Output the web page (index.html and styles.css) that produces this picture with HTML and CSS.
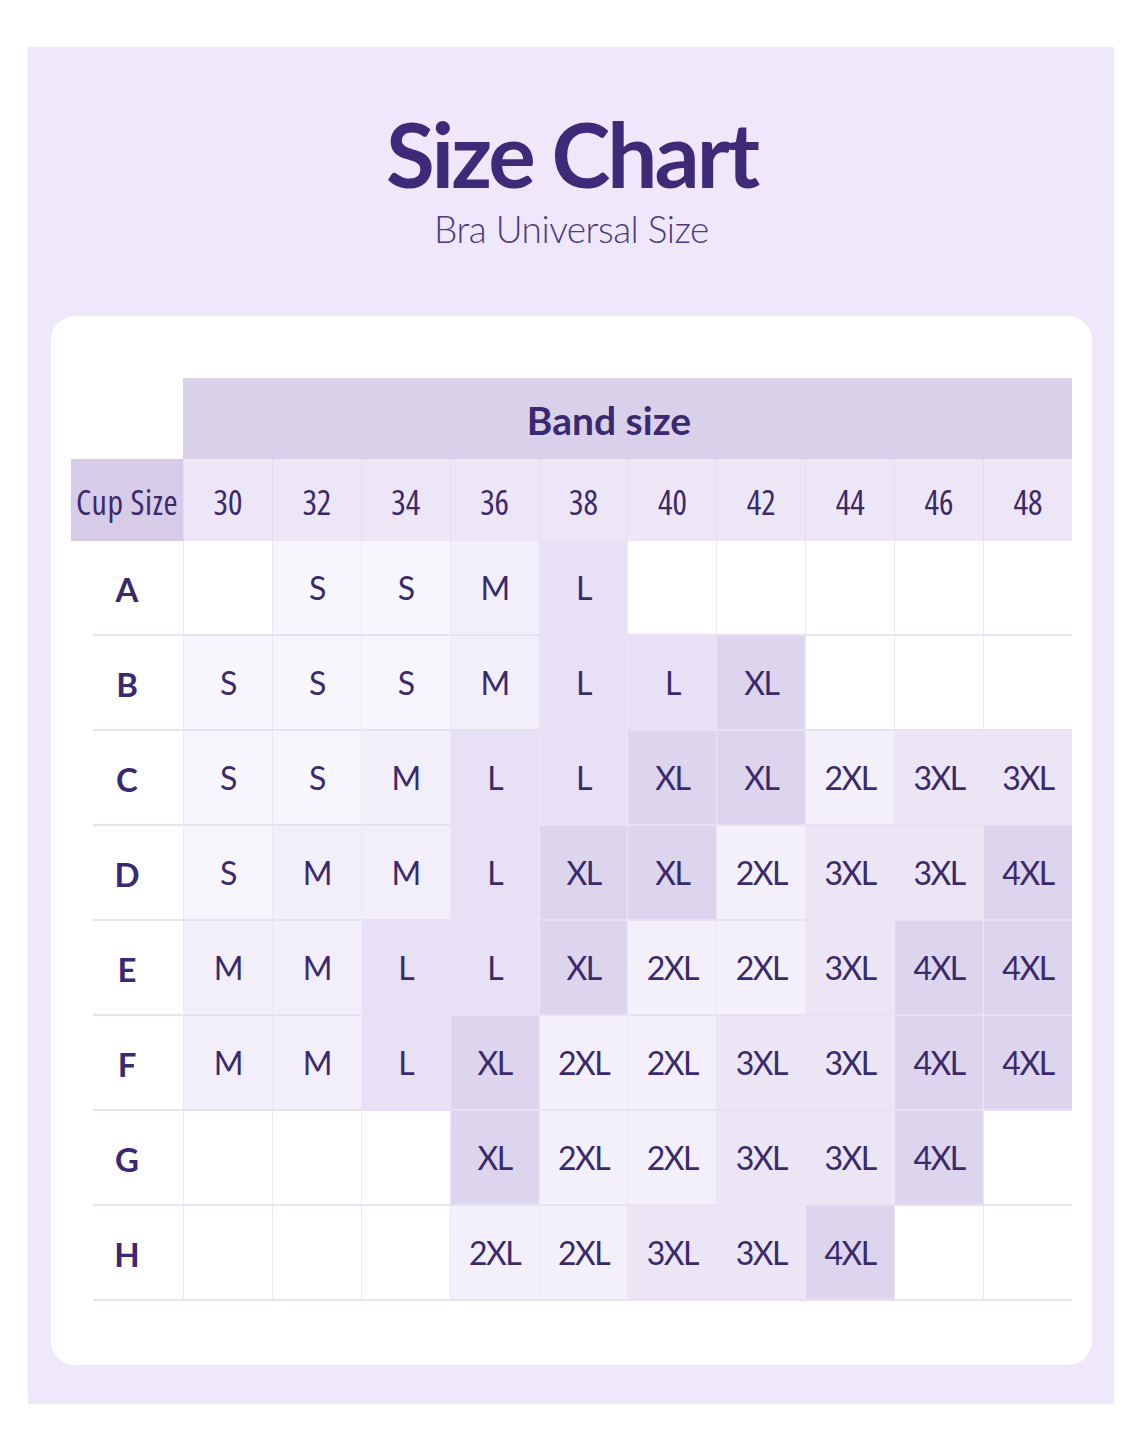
FILE: index.html
```html
<!DOCTYPE html>
<html lang="en">
<head>
<meta charset="utf-8">
<title>Size Chart</title>
<link rel="stylesheet" href="styles.css">
</head>
<body>
<div class="panel">
  <header class="head">
    <h1 class="title">Size Chart</h1>
    <p class="subtitle">Bra Universal Size</p>
  </header>
  <div class="card">
    <div class="chart">
      <div class="blank"></div>
      <div class="band">Band size</div>

      <div class="cup">Cup Size</div>
      <div class="num">30</div><div class="num">32</div><div class="num">34</div><div class="num">36</div><div class="num">38</div>
      <div class="num">40</div><div class="num">42</div><div class="num">44</div><div class="num">46</div><div class="num">48</div>

      <div class="letter">A</div>
      <div class="c e"></div><div class="c s">S</div><div class="c s">S</div><div class="c m">M</div><div class="c l">L</div>
      <div class="c e"></div><div class="c e"></div><div class="c e"></div><div class="c e"></div><div class="c e"></div>

      <div class="letter">B</div>
      <div class="c s">S</div><div class="c s">S</div><div class="c s">S</div><div class="c m">M</div><div class="c l">L</div>
      <div class="c l">L</div><div class="c xl">XL</div><div class="c e"></div><div class="c e"></div><div class="c e"></div>

      <div class="letter">C</div>
      <div class="c s">S</div><div class="c s">S</div><div class="c m">M</div><div class="c l">L</div><div class="c l">L</div>
      <div class="c xl">XL</div><div class="c xl">XL</div><div class="c x2">2XL</div><div class="c x3">3XL</div><div class="c x3">3XL</div>

      <div class="letter">D</div>
      <div class="c s">S</div><div class="c m">M</div><div class="c m">M</div><div class="c l">L</div><div class="c xl">XL</div>
      <div class="c xl">XL</div><div class="c x2">2XL</div><div class="c x3">3XL</div><div class="c x3">3XL</div><div class="c x4">4XL</div>

      <div class="letter">E</div>
      <div class="c m">M</div><div class="c m">M</div><div class="c l">L</div><div class="c l">L</div><div class="c xl">XL</div>
      <div class="c x2">2XL</div><div class="c x2">2XL</div><div class="c x3">3XL</div><div class="c x4">4XL</div><div class="c x4">4XL</div>

      <div class="letter">F</div>
      <div class="c m">M</div><div class="c m">M</div><div class="c l">L</div><div class="c xl">XL</div><div class="c x2">2XL</div>
      <div class="c x2">2XL</div><div class="c x3">3XL</div><div class="c x3">3XL</div><div class="c x4">4XL</div><div class="c x4">4XL</div>

      <div class="letter">G</div>
      <div class="c e"></div><div class="c e"></div><div class="c e"></div><div class="c xl">XL</div><div class="c x2">2XL</div>
      <div class="c x2">2XL</div><div class="c x3">3XL</div><div class="c x3">3XL</div><div class="c x4">4XL</div><div class="c e"></div>

      <div class="letter">H</div>
      <div class="c e"></div><div class="c e"></div><div class="c e"></div><div class="c x2">2XL</div><div class="c x2">2XL</div>
      <div class="c x3">3XL</div><div class="c x3">3XL</div><div class="c x4">4XL</div><div class="c e"></div><div class="c e"></div>
    </div>
  </div>
</div>
</body>
</html>
```
FILE: styles.css
```css
html, body {
  margin: 0;
  padding: 0;
  background: #ffffff;
}

body {
  padding: 47px 0 0 28px;
  font-family: Lato, "Open Sans", sans-serif;
  color: #3a2a6c;
}

.panel {
  width: 1086px;
  height: 1357px;
  box-sizing: border-box;
  background: #efe8fb;
  padding: 0 22px 0 23px;
  display: flex;
  flex-direction: column;
}

.head {
  height: 269px;
  display: flex;
  flex-direction: column;
  align-items: center;
}

.title {
  margin: 59px 0 0;
  font-size: 89px;
  line-height: 96px;
  font-weight: 700;
  letter-spacing: -3px;
  color: #3f2a7a;
}

.subtitle {
  margin: 9px 0 0;
  font-size: 37px;
  line-height: 36px;
  font-weight: 300;
  letter-spacing: -0.5px;
  color: #4a3b82;
}

.card {
  background: #ffffff;
  border-radius: 24px;
  padding: 62px 20px 65px 20px;
  height: 1049px;
  box-sizing: border-box;
}

.chart {
  display: grid;
  grid-template-columns: 112px repeat(10, 88.9px);
  grid-template-rows: 81px 82px repeat(8, 95px);
}

.blank {
  background: #ffffff;
}

.band {
  grid-column: 2 / span 10;
  background: #d9d1ea;
  display: flex;
  align-items: center;
  justify-content: center;
  font-size: 39px;
  font-weight: 700;
  color: #3a2870;
  padding: 3px 37px 0 0;
  box-sizing: border-box;
}

.cup {
  background: #d6cce8;
  display: flex;
  align-items: center;
  justify-content: center;
  font-family: "Open Sans", sans-serif;
  font-stretch: 75%;
  font-size: 34px;
  font-weight: 500;
  letter-spacing: 0.6px;
  color: #3a2a6c;
  white-space: nowrap;
  padding-top: 4px;
  box-sizing: border-box;
}

.num {
  background: #ece6f6;
  border-left: 1px solid #e4ddf2;
  display: flex;
  align-items: center;
  justify-content: center;
  font-family: "Open Sans", sans-serif;
  font-stretch: 75%;
  font-size: 34px;
  color: #3a2a6c;
  padding-top: 4px;
  box-sizing: border-box;
}

.letter {
  display: flex;
  align-items: center;
  justify-content: center;
  font-size: 33px;
  font-weight: 700;
  color: #3a2870;
  background: linear-gradient(#e7e1f4, #e7e1f4) no-repeat 22px 100% / calc(100% - 22px) 2px;
}

.c {
  display: flex;
  align-items: center;
  justify-content: center;
  font-size: 32px;
  letter-spacing: -1.5px;
  color: #3a2a6c;
  border-left: 1px solid #ece7f6;
  border-bottom: 2px solid #e7e1f4;
  box-sizing: border-box;
}

.e  { background: #ffffff; }
.s  { background: #f8f6fd; }
.m  { background: #f2eefa; }
.l  { background: #e8e0f4; }
.xl { background: #ddd4ee; }
.x2 { background: #f3effb; }
.x3 { background: #ebe5f6; }
.x4 { background: #ddd4ee; }
```
